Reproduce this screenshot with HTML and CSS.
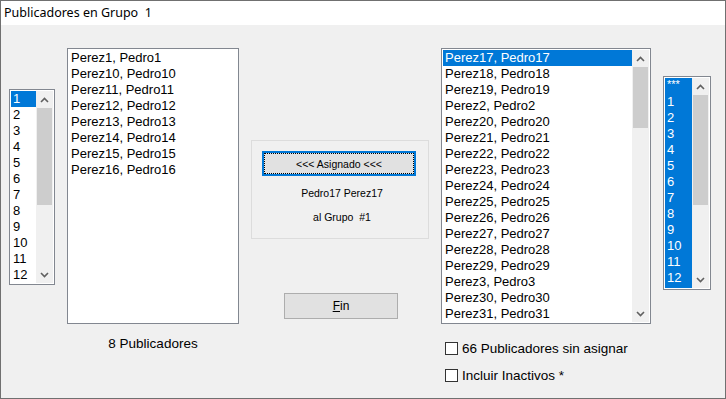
FILE: index.html
```html
<!DOCTYPE html>
<html>
<head>
	<meta charset="utf-8">
	<title>Publicadores en Grupo 1</title>
	<link rel="stylesheet" href="styles.css">
</head>

<body>
	<div class="window">
		<div class="titlebar">Publicadores en Grupo  1</div>

		<div class="client">
			<!-- LISTA DE GRUPOS (IZQUIERDA) -->
			<div class="listbox groups">
				<ul class="items">
					<li class="sel">1</li><li>2</li><li>3</li><li>4</li><li>5</li><li>6</li>
					<li>7</li><li>8</li><li>9</li><li>10</li><li>11</li><li>12</li>
				</ul>
				<div class="vscroll">
					<span class="arrow"><svg width="9" height="6" viewBox="0 0 9 6"><path d="M1 5L4.5 1.5L8 5" /></svg></span>
					<span class="track"><span class="thumb"></span></span>
					<span class="arrow"><svg width="9" height="6" viewBox="0 0 9 6"><path d="M1 1L4.5 4.5L8 1" /></svg></span>
				</div>
			</div>

			<!-- PUBLICADORES DEL GRUPO -->
			<div class="column names">
				<div class="listbox assigned">
					<ul class="items">
						<li>Perez1, Pedro1</li>
						<li>Perez10, Pedro10</li>
						<li>Perez11, Pedro11</li>
						<li>Perez12, Pedro12</li>
						<li>Perez13, Pedro13</li>
						<li>Perez14, Pedro14</li>
						<li>Perez15, Pedro15</li>
						<li>Perez16, Pedro16</li>
					</ul>
				</div>
				<div class="count">8 Publicadores</div>
			</div>

			<!-- ACCIONES -->
			<div class="column middle">
				<div class="group">
					<button class="assign">&lt;&lt;&lt; Asignado &lt;&lt;&lt;</button>
					<div class="caption">Pedro17 Perez17</div>
					<div class="caption">al Grupo  #1</div>
				</div>
				<button class="fin"><u>F</u>in</button>
			</div>

			<!-- PUBLICADORES SIN ASIGNAR -->
			<div class="column right">
				<div class="listbox unassigned">
					<ul class="items">
						<li class="sel">Perez17, Pedro17</li>
						<li>Perez18, Pedro18</li>
						<li>Perez19, Pedro19</li>
						<li>Perez2, Pedro2</li>
						<li>Perez20, Pedro20</li>
						<li>Perez21, Pedro21</li>
						<li>Perez22, Pedro22</li>
						<li>Perez23, Pedro23</li>
						<li>Perez24, Pedro24</li>
						<li>Perez25, Pedro25</li>
						<li>Perez26, Pedro26</li>
						<li>Perez27, Pedro27</li>
						<li>Perez28, Pedro28</li>
						<li>Perez29, Pedro29</li>
						<li>Perez3, Pedro3</li>
						<li>Perez30, Pedro30</li>
						<li>Perez31, Pedro31</li>
					</ul>
					<div class="vscroll">
						<span class="arrow"><svg width="9" height="6" viewBox="0 0 9 6"><path d="M1 5L4.5 1.5L8 5" /></svg></span>
						<span class="track"><span class="thumb"></span></span>
						<span class="arrow"><svg width="9" height="6" viewBox="0 0 9 6"><path d="M1 1L4.5 4.5L8 1" /></svg></span>
					</div>
				</div>
				<label class="check"><span class="box"></span>66 Publicadores sin asignar</label>
				<label class="check second"><span class="box"></span>Incluir Inactivos *</label>
			</div>

			<!-- LISTA DE GRUPOS (DERECHA) -->
			<div class="listbox targets">
				<ul class="items all-sel">
					<li class="stars">***</li><li>1</li><li>2</li><li>3</li><li>4</li><li>5</li><li>6</li>
					<li>7</li><li>8</li><li>9</li><li>10</li><li>11</li><li>12</li>
				</ul>
				<div class="vscroll">
					<span class="arrow"><svg width="9" height="6" viewBox="0 0 9 6"><path d="M1 5L4.5 1.5L8 5" /></svg></span>
					<span class="track"><span class="thumb"></span></span>
					<span class="arrow"><svg width="9" height="6" viewBox="0 0 9 6"><path d="M1 1L4.5 4.5L8 1" /></svg></span>
				</div>
			</div>
		</div>
	</div>
</body>
</html>
```

FILE: styles.css
```css
* { box-sizing: border-box; }
body {
	margin: 0; background-color: #fff; font-family: 'Liberation Sans', Arial, sans-serif; font-size: 13px; color: #000;
}
.window {
	width: 726px; height: 399px; border: 1px solid #707070; background-color: #f0f0f0; display: flex; flex-direction: column;
}
.titlebar {
	height: 24px; line-height: 24px; padding-left: 3px; background-color: #fff; font-family: 'Noto Sans', sans-serif; font-size: 12.5px; white-space: pre;
}
.client { display: flex; align-items: flex-start; padding: 23px 0 0 8px; }
.column { display: flex; flex-direction: column; margin-left: 12px; }

/* LISTBOX */
.listbox { display: flex; border: 1px solid #828790; background-color: #fff; padding: 1px; }
.items { list-style: none; margin: 0; padding: 0; flex: 1; }
.items li { height: 16px; line-height: 16px; padding-left: 2px; white-space: nowrap; }
.items .sel, .all-sel { background-color: #0078d7; color: #fff; }
.items .stars { font-size: 11px; line-height: 12px; }
.vscroll { width: 17px; display: flex; flex-direction: column; background-color: #f0f0f0; }
.arrow { height: 17px; display: flex; align-items: center; justify-content: center; }
.arrow path { fill: none; stroke: #606060; stroke-width: 1.6; }
.track { flex: 1; }
.thumb { display: block; margin: 0 1px; background-color: #cdcdcd; }

.groups { width: 46px; height: 196px; margin-top: 41px; }
.groups .thumb { height: 97px; }
.names { width: 172px; }
.assigned { height: 276px; }
.count { margin-top: 12px; text-align: center; line-height: 16px; font-size: 13.5px; }

/* CENTRO */
.middle { width: 178px; margin-top: 92px; }
.group { height: 99px; border: 1px solid #dcdcdc; padding-top: 10px; }
.assign {
	display: block; width: 154px; height: 25px; margin-left: 10px; padding: 0; border: 1px solid #0078d7; box-shadow: inset 0 0 0 1px #0078d7; outline: 1px dotted #000; outline-offset: -3px; background-color: #e1e1e1; font-family: inherit; font-size: 10.5px; color: #000;
}
.caption { margin-top: 10px; padding-left: 4px; text-align: center; line-height: 14px; font-size: 10.5px; white-space: pre; }
.fin {
	width: 114px; height: 26px; margin: 54px 0 0 33px; padding: 0; border: 1px solid #adadad; background-color: #e1e1e1; font-family: inherit; font-size: 12px; color: #000;
}

/* DERECHA */
.right { width: 210px; }
.unassigned { height: 276px; }
.unassigned .thumb { height: 61px; }
.check { display: flex; align-items: center; height: 16px; margin: 16px 0 0 4px; font-size: 13.5px; white-space: nowrap; }
.check.second { margin-top: 11px; }
.box { width: 13px; height: 13px; margin-right: 4px; border: 1px solid #333; background-color: #fff; }
.targets { width: 48px; height: 214px; margin: 28px 0 0 12px; }
.targets .thumb { height: 110px; }
```
